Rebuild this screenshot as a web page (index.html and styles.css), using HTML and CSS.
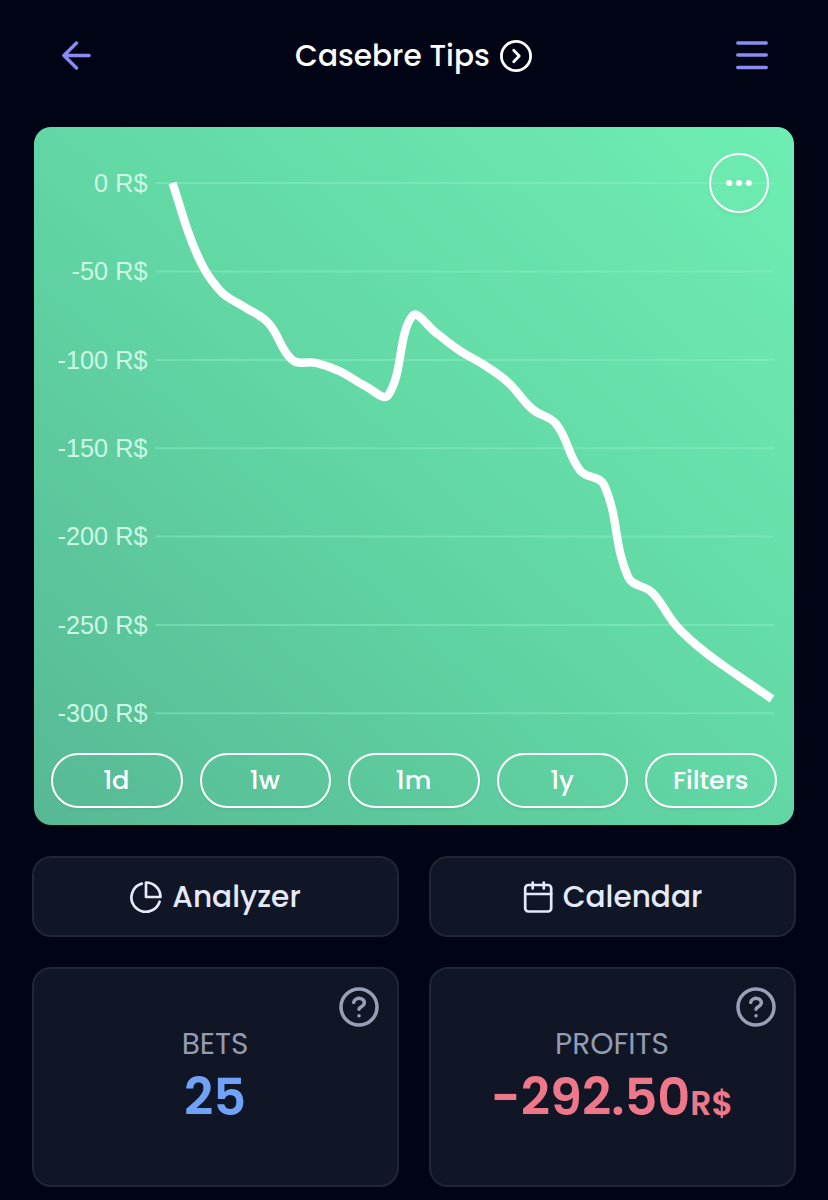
FILE: index.html
```html
<!DOCTYPE html>
<html lang="en">
<head>
<meta charset="utf-8">
<title>Casebre Tips</title>
<link rel="stylesheet" href="styles.css">
</head>
<body>
<header class="topbar">
  <svg class="back" width="29" height="29" viewBox="0 0 30 30"><path d="M28 15H2M15 2 2 15l13 13"/></svg>
  <h1 class="title"><span class="title-text">Casebre Tips</span>
    <svg class="title-icon" width="32" height="32" viewBox="0 0 32 32"><circle cx="16" cy="16" r="14.6"/><path d="m13.7 10.3 5.5 5.7-5.5 5.7"/></svg>
  </h1>
  <svg class="menu" width="32" height="30" viewBox="0 0 32 30"><path d="M1.800 2.900h28.400M1.800 15.100h28.400M1.800 27.400h28.400"/></svg>
</header>
<main>
  <section class="chart-card">
    <svg class="chart" width="760" height="626" viewBox="34 127 760 626">
      <path class="grid" d="M155 183H774M155 271.5H774M155 360H774M155 448.3H774M155 536.5H774M155 625H774M155 713.3H774"/>
      <g class="axis">
        <text x="147.500" y="192">0 R$</text>
        <text x="147.500" y="280">-50 R$</text>
        <text x="147.500" y="368.500">-100 R$</text>
        <text x="147.500" y="456.500">-150 R$</text>
        <text x="147.500" y="545">-200 R$</text>
        <text x="147.500" y="633.500">-250 R$</text>
        <text x="147.500" y="722">-300 R$</text>
      </g>
      <path class="line" id="line"/>
    </svg>
    <button class="more"><svg width="28" height="8" viewBox="0 0 28 8"><circle cx="4.200" cy="4" r="3"/><circle cx="14" cy="4" r="3"/><circle cx="23.800" cy="4" r="3"/></svg></button>
    <div class="ranges">
      <button class="pill">1d</button><button class="pill">1w</button><button class="pill">1m</button><button class="pill">1y</button><button class="pill">Filters</button>
    </div>
  </section>
  <div class="actions">
    <button class="action">
      <svg width="32" height="32" viewBox="0 0 32 32"><path d="M16 1.500A14.500 14.500 0 0 1 30.500 16H16ZM11.800 2.600A14.400 14.400 0 1 0 29.600 20.700"/></svg><span>Analyzer</span>
    </button>
    <button class="action">
      <svg width="30" height="32" viewBox="0 0 30 32"><rect x="2.200" y="4" width="26" height="26.500" rx="3.300"/><path d="M2.200 13h26M9.700 1.500v6M20.800 1.500v6"/></svg><span>Calendar</span>
    </button>
  </div>
  <div class="stats">
    <section class="stat">
      <svg class="help" width="40" height="40" viewBox="0 0 40 40"><circle cx="20" cy="20" r="18"/><path d="M14.700 15.400C16 9.700 26 10.100 25.300 16.300C24.900 19.700 20 20.200 20 22.200M20 28.700v.1"/></svg>
      <h2 class="label">BETS</h2><p class="value blue">25</p>
    </section>
    <section class="stat">
      <svg class="help" width="40" height="40" viewBox="0 0 40 40"><circle cx="20" cy="20" r="18"/><path d="M14.700 15.400C16 9.700 26 10.100 25.300 16.300C24.900 19.700 20 20.200 20 22.200M20 28.700v.1"/></svg>
      <h2 class="label">PROFITS</h2><p class="value red">-292.50<span class="unit">R$</span></p>
    </section>
  </div>
</main>
<script src="chart.js"></script>
</body>
</html>
```
FILE: styles.css
```css
* { box-sizing: border-box; margin: 0; }
body { background: #010414; color: #fff; font-family: Poppins, Inter, sans-serif; height: 1200px; overflow: hidden; }
svg { display: block; flex: none; fill: none; stroke-linecap: round; stroke-linejoin: round; }
button { font: inherit; color: inherit; background: none; padding: 0; }
.topbar { height: 127px; padding: 0 60px 17px 62px; display: grid; grid-template-columns: 1fr auto 1fr; align-items: center; }
.back, .menu { stroke: #8a8cf2; stroke-width: 3.5; }
.menu { justify-self: end; }
.title { display: flex; align-items: center; gap: 10px; margin-right: 3px; font-size: 29.6px; font-weight: 500; line-height: 42px; }
.title-text { width: 195px; padding-top: 2px; white-space: nowrap; }
.title-icon { margin-top: 1px; stroke: #fff; stroke-width: 2.8; }
.chart-card { position: relative; width: 760px; height: 698px; margin: 0 34px; border-radius: 17px; background: linear-gradient(to top right, #57b994, #62d7a5 50%, #6eeeb2); }
.grid { stroke: #8df3cb; stroke-opacity: .42; stroke-width: 2; stroke-linecap: butt; }
.axis { fill: #cdf8e5; font: 25.3px "Liberation Sans", Arial, sans-serif; text-anchor: end; }
.line { stroke: #fff; stroke-width: 8.3; stroke-linecap: butt; }
.more { position: absolute; top: 26px; right: 25px; width: 60px; height: 60px; border: 2px solid #fff; border-radius: 50%; display: grid; place-items: center; box-shadow: 0 2px 4px #0000000d; }
.more circle { fill: #fff; }
.ranges { display: flex; gap: 17px; padding: 0 17px; }
.pill { flex: 1; height: 55px; padding: 0 1px 1px 0; border: 2px solid #fff; border-radius: 28px; font-size: 25.6px; font-weight: 500; line-height: 50px; box-shadow: 0 2px 3px #0000000d; }
.actions, .stats { display: grid; grid-template-columns: 1fr 1fr; gap: 30px; padding: 0 32px; }
.actions { margin-top: 31px; }
.stats { margin-top: 30px; }
.action, .stat { background: #111627; border: 2px solid #202636; border-radius: 19px; }
.action { height: 81px; padding-top: 1px; display: flex; align-items: center; justify-content: center; gap: 10px; color: #e5eafa; font-size: 29.6px; font-weight: 500; }
.action svg { stroke: currentColor; stroke-width: 2.7; }
.stat { position: relative; height: 220px; padding: 53px 1px 0 0; text-align: center; }
.help { position: absolute; top: 18px; right: 18px; stroke: #97a0b6; stroke-width: 3.5; }
.label { color: #939cb1; font-size: 29.6px; font-weight: 400; line-height: 43px; }
.value { font-size: 51px; font-weight: 600; line-height: 64px; white-space: nowrap; }
.blue { color: #70a3f8; }
.red { color: #ee7889; }
.unit { font-size: 33px; }
```
FILE: chart.js
```js
// Running balance after each bet, in chart coordinates
const ys = [183, 253, 291, 307, 323, 360, 363, 371.5, 385.5, 395, 316, 333, 351, 365, 382.5, 409, 424, 470.5, 485, 577, 592.5, 625.5, 648, 666, 682.5, 699];
const pts = ys.map((y, i) => ({ x: 172.5 + i * 23.98, y }));
const tension = 0.4;
const dist = (a, b) => Math.hypot(a.x - b.x, a.y - b.y);
const handles = pts.map((p, i) => {
  const a = pts[i - 1] || p, b = pts[i + 1] || p;
  const da = dist(a, p), db = dist(p, b);
  const fa = tension * da / (da + db), fb = tension * db / (da + db);
  return [p.x - fa * (b.x - a.x), p.y - fa * (b.y - a.y), p.x + fb * (b.x - a.x), p.y + fb * (b.y - a.y)];
});
let d = `M${pts[0].x} ${pts[0].y}`;
for (let i = 1; i < pts.length; i++) {
  d += `C${handles[i - 1][2]} ${handles[i - 1][3]} ${handles[i][0]} ${handles[i][1]} ${pts[i].x} ${pts[i].y}`;
}
document.getElementById("line").setAttribute("d", d);
```
